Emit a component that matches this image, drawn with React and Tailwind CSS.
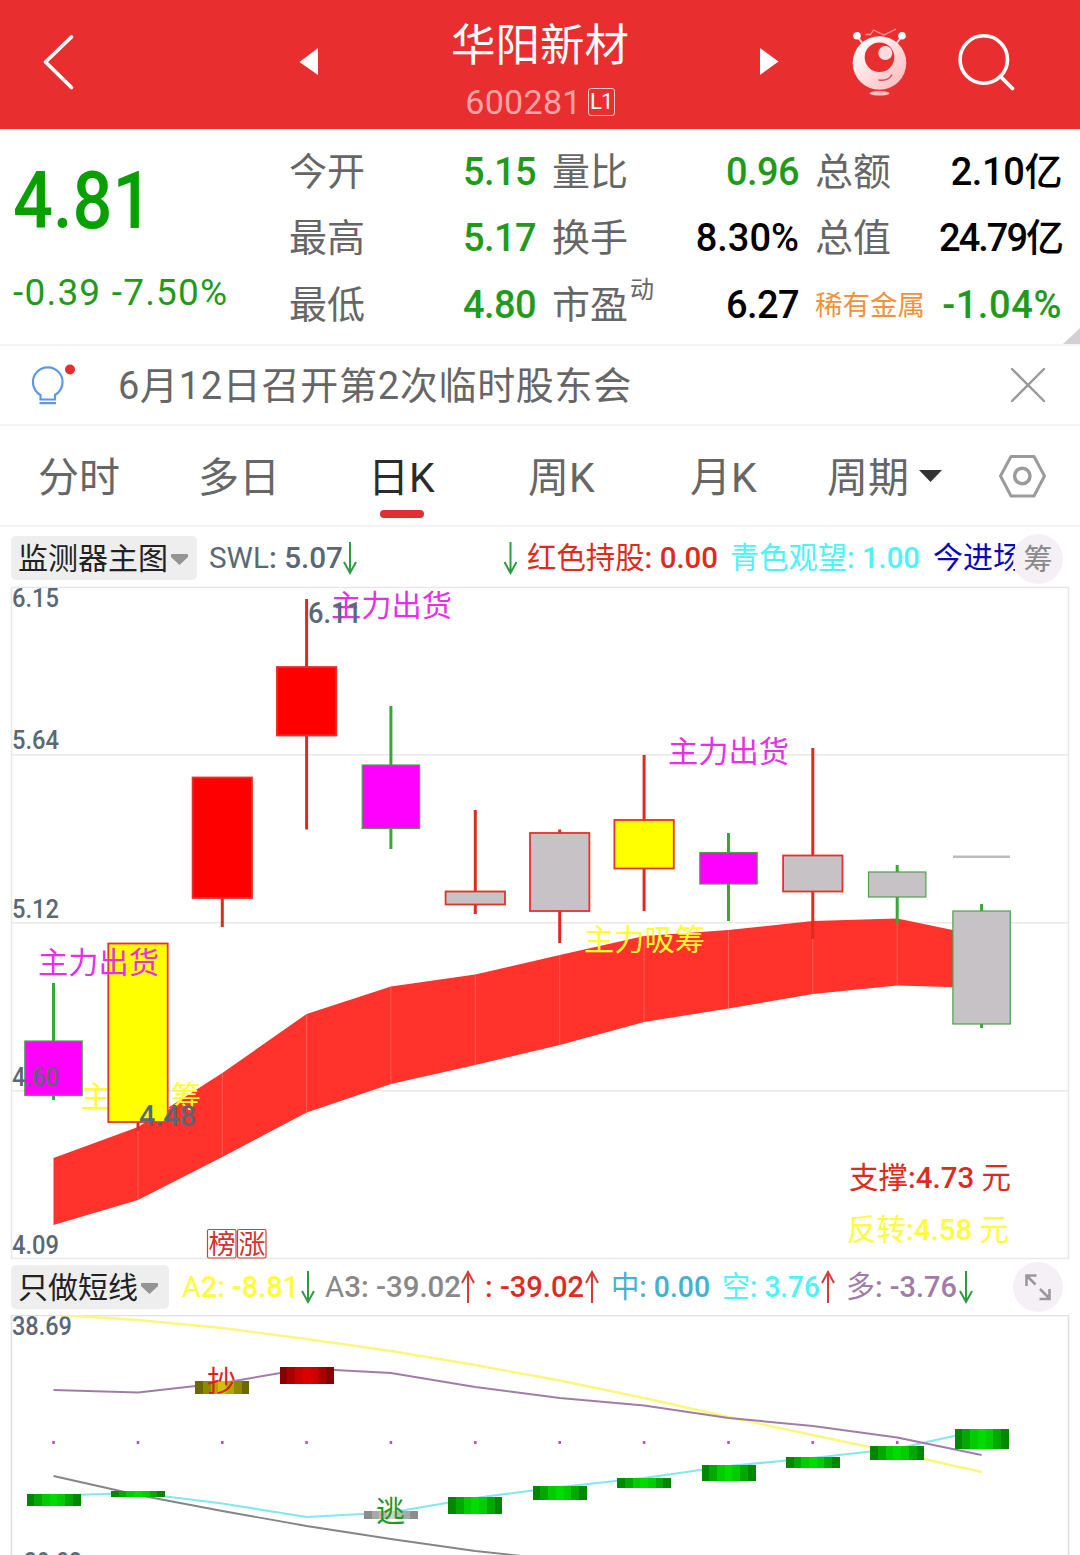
import clsx from 'clsx';

const STATS = [
  [
    { label: '今开', value: '5.15', color: 'text-[#1f9a1b] tracking-[-0.6px]' },
    { label: '最高', value: '5.17', color: 'text-[#1f9a1b] tracking-[-0.6px]' },
    { label: '最低', value: '4.80', color: 'text-[#1f9a1b] tracking-[-0.6px]' },
  ],
  [
    { label: '量比', value: '0.96', color: 'text-[#1f9a1b] tracking-[-0.6px]' },
    { label: '换手', value: '8.30%', color: 'text-black tracking-[0px]' },
    { label: '市盈', sup: '动', value: '6.27', color: 'text-black tracking-[-0.6px]' },
  ],
  [
    { label: '总额', value: '2.10亿', color: 'text-black tracking-[-0.4px]' },
    { label: '总值', value: '24.79亿', color: 'text-black tracking-[-2px]' },
    { label: '稀有金属', tag: true, value: '-1.04%', color: 'text-[#1f9a1b] tracking-[0.6px]' },
  ],
];

const RED = '#e02a20';
const GREEN = '#35a835';
const GREY = '#c7c2c6';
const SLATE = '#5a6875';

// cx is the centre of the body, top/bottom its span, high/low the wick
const CANDLES = [
  { cx: 53.5, top: 1041, bottom: 1095.5, high: 983, low: 1100, fill: '#ff00ff', up: false },
  { cx: 138, top: 943.5, bottom: 1122, high: 943, low: 1131, fill: '#ffff00', up: true },
  { cx: 222.3, top: 777.5, bottom: 898, high: 777, low: 927, fill: '#ff0000', up: true },
  { cx: 306.6, top: 667, bottom: 735.5, high: 599, low: 829.5, fill: '#ff0000', up: true },
  { cx: 390.9, top: 765, bottom: 828.5, high: 706, low: 849, fill: '#ff00ff', up: false },
  { cx: 475.3, top: 891.5, bottom: 904.5, high: 810, low: 914, fill: GREY, up: true },
  { cx: 559.7, top: 833, bottom: 911, high: 829.5, low: 943, fill: GREY, up: true },
  { cx: 644.1, top: 820, bottom: 868.5, high: 755, low: 911, fill: '#ffff00', up: true },
  { cx: 728.5, top: 852.5, bottom: 884, high: 833, low: 921, fill: '#ff00ff', up: false },
  { cx: 812.8, top: 855.5, bottom: 891.5, high: 748, low: 939, fill: GREY, up: true },
  { cx: 897.2, top: 872, bottom: 897, high: 865, low: 924, fill: GREY, up: false },
  { cx: 981.6, top: 911, bottom: 1024, high: 904, low: 1028, fill: GREY, up: false },
];

const BAND_TOP = [1158, 1127, 1073, 1014, 986.5, 974.5, 955, 936, 930, 921, 918.5, 936];
const BAND_BOTTOM = [1225, 1200, 1157, 1112.5, 1084, 1065, 1045, 1022, 1008.5, 994, 985.5, 988];

const LINES = [
  { color: '#fbf77c', width: 2.4, ys: [1314.5, 1320, 1328, 1339, 1351, 1365, 1380.5, 1398, 1417, 1435, 1453, 1472] },
  { color: '#7fe9ee', width: 2.2, ys: [1495.5, 1493, 1503.5, 1517, 1512.5, 1498, 1487, 1478, 1466, 1458, 1448.5, 1430] },
  { color: '#a27ca6', width: 2, ys: [1390, 1392.5, 1383, 1368.5, 1373, 1387, 1398, 1405.5, 1418, 1426, 1437.5, 1455] },
  { color: '#858585', width: 1.8, ys: [1476, 1495, 1511, 1526, 1539, 1551, 1560] },
];

const SHADES = {
  green: ['#008700', '#00a800', '#00cc00', '#00dc00'],
  olive: ['#6c6800', '#8e8a00', '#b0a800', '#d0c400'],
  red: ['#8a0000', '#aa0000', '#cc0000', '#dd0000'],
  grey: ['#8c8c8c', '#a8a8a8', '#bcbcbc', '#d0d0d0'],
};

const BARS = [
  { top: 1494, bottom: 1506, shade: 'green' },
  { top: 1491, bottom: 1497, shade: 'green' },
  { top: 1381, bottom: 1394, shade: 'olive' },
  { top: 1367, bottom: 1384, shade: 'red' },
  { top: 1511, bottom: 1519, shade: 'grey' },
  { top: 1497, bottom: 1514, shade: 'green' },
  { top: 1486, bottom: 1500, shade: 'green' },
  { top: 1478, bottom: 1488, shade: 'green' },
  { top: 1465, bottom: 1481, shade: 'green' },
  { top: 1457, bottom: 1468, shade: 'green' },
  { top: 1446, bottom: 1460, shade: 'green' },
  { top: 1429, bottom: 1449, shade: 'green' },
];

const points = (ys) => ys.map((y, i) => `${CANDLES[i].cx},${y}`).join(' ');

// numbers are set a little heavier than the words beside them
const Label = ({ x, y, w, size = 30, fill, children }) => (
  <text x={x} y={y} fill={fill} fontSize={size} textLength={w} lengthAdjust="spacingAndGlyphs">
    {children.split(/([\d.:-]+)/).map((part, i) => (
      <tspan key={i} fontWeight={i % 2 ? 500 : 400}>
        {part}
      </tspan>
    ))}
  </text>
);

const Mascot = () => (
  <svg className="h-[72px] w-[60px]" viewBox="850 26 60 72">
    <defs>
      <linearGradient id="body" x1="0" y1="0" x2="1" y2="1">
        <stop offset="0.1" stopColor="#fff" />
        <stop offset="1" stopColor="#ffb4b8" />
      </linearGradient>
    </defs>
    <path d="M865.500 34.500h5l3-4.500 10.500 5 12-6" fill="none" stroke="#f79a9a" strokeWidth="1.300" />
    <path d="M857 36l6 8M902 36l-6 8" stroke="#fbd5d6" strokeWidth="2" />
    <circle cx="857" cy="35.700" r="3.800" fill="#fff" />
    <circle cx="902" cy="35.700" r="3.800" fill="#fff" />
    <circle cx="879.500" cy="63" r="26.800" fill="url(#body)" />
    <circle cx="879.500" cy="57.300" r="14.800" fill="#e82e2f" />
    <circle cx="885.300" cy="53" r="7" fill="#ffdcdd" />
    <path d="M878.500 80q10 1.500 13.500-5.500" fill="none" stroke="#e04a4c" strokeWidth="1.500" />
    <ellipse cx="879.500" cy="93.300" rx="10" ry="2.300" fill="#fbbcbe" />
  </svg>
);

const Header = () => (
  <header className="flex h-[129px] items-start bg-[#e82e2f] text-white">
    <svg className="mt-[32px] ml-[40px] h-[60px] w-[40px]" viewBox="40 32 40 60" fill="none">
      <path d="M71.500 37L45.500 62l26 25.500" stroke="#fff" strokeWidth="3.700" strokeLinecap="round" strokeLinejoin="round" />
    </svg>
    <svg className="mt-[46px] ml-[219px] h-[32px] w-[20px]" viewBox="299 46 20 32">
      <path d="M299.500 62L318 48v27z" fill="#fff" />
    </svg>
    <div className="flex w-[440px] flex-col items-center pt-[17px] pl-[2px]">
      <div className="h-[58px] text-[44.5px] leading-[58px]">华阳新材</div>
      <div className="mt-[10px] flex h-[34px] items-center gap-[6px]">
        <span className="text-[34px] leading-[34px] tracking-[0.3px] text-[#ffa5a5]">600281</span>
        <span className="flex h-[28px] w-[27px] items-center justify-center rounded-[3px] border border-[#ffc9c9] text-[22px] leading-none tracking-[-1px]">
          L1
        </span>
      </div>
    </div>
    <svg className="mt-[46px] h-[32px] w-[20px]" viewBox="759 46 20 32">
      <path d="M778.500 61.500L760 48v27z" fill="#fff" />
    </svg>
    <div className="mt-[26px] ml-[71px]">
      <Mascot />
    </div>
    <svg className="mt-[30px] ml-[45px] h-[64px] w-[64px]" viewBox="955 30 64 64" fill="none">
      <circle cx="983.800" cy="59.500" r="23.700" stroke="#fff" strokeWidth="3.600" />
      <path d="M1000.500 76.500l12 12" stroke="#fff" strokeWidth="3.800" strokeLinecap="round" />
    </svg>
  </header>
);

const Quote = () => (
  <section className="relative flex h-[217px] overflow-hidden border-b-2 border-[#f3f3f3]">
    <div className="w-[289px] shrink-0 pl-[13px]">
      <div className="mt-[32px] h-[80px] origin-left scale-x-[0.89] text-[79px] leading-[80px] font-medium whitespace-nowrap text-[#07a000]">
        4.81
      </div>
      <div className="mt-[32px] h-[40px] text-[37px] leading-[40px] tracking-[1.2px] whitespace-nowrap text-[#1f9a1b]">
        -0.39 -7.50%
      </div>
    </div>
    <div className="mt-[10px] flex gap-[16px]">
      {STATS.map((col, i) => (
        <div key={i} className="flex w-[247px] flex-col">
          {col.map((s) => (
            <div key={s.label} className="flex h-[66.5px] items-center justify-between whitespace-nowrap">
              <span
                className={clsx(
                  'flex',
                  s.tag ? 'text-[27.5px] text-[#f0923c]' : 'text-[38px] text-[#666]'
                )}
              >
                {s.label}
                {s.sup && <span className="-mt-[5px] ml-[2px] text-[24px] leading-[36px]">{s.sup}</span>}
              </span>
              <span className={clsx('text-[38px] font-medium', s.color)}>{s.value}</span>
            </div>
          ))}
        </div>
      ))}
    </div>
    <svg className="absolute right-0 bottom-0 h-[16px] w-[17px]" viewBox="0 0 17 16">
      <path d="M17 0v16H0z" fill="#d3d0d3" />
    </svg>
  </section>
);

const Notice = () => (
  <section className="flex h-[80px] items-center border-b-2 border-[#f3f3f3] text-[#666]">
    <svg className="ml-[28px] h-[50px] w-[50px]" viewBox="28 360 50 50" fill="none">
      <path d="M40.500 399.500V395a14.800 14.800 0 1 1 14.500 0v4.500zM39.500 403.200h16.500" stroke="#5c97e6" strokeWidth="2.200" />
      <circle cx="70" cy="369.500" r="5" fill="#e62e30" />
    </svg>
    <div className="mt-[3px] ml-[40px] text-[38px] tracking-[0.7px] whitespace-nowrap">6月12日召开第2次临时股东会</div>
    <svg className="mr-[34px] ml-auto h-[36px] w-[36px]" viewBox="0 0 36 36">
      <path d="M2 2l32 32M34 2L2 34" stroke="#999" strokeWidth="2.400" strokeLinecap="round" />
    </svg>
  </section>
);

const Tabs = () => (
  <nav className="flex h-[101px] items-start border-b-2 border-[#f3f3f3] pl-[38px] text-[41px] leading-[60px] text-[#666]">
    <div className="mt-[22px] w-[160px]">分时</div>
    <div className="mt-[22px] w-[170px]">多日</div>
    <div className="mt-[22px] w-[160px] text-[#2b2b2b]">
      日K
      <div className="mt-[2px] ml-[12px] h-[8px] w-[44px] rounded-full bg-[#e22e30]" />
    </div>
    <div className="mt-[22px] w-[162px]">周K</div>
    <div className="mt-[22px] w-[137px]">月K</div>
    <div className="mt-[22px] flex items-center gap-[10px]">
      周期
      <svg className="-mt-[5px] h-[12px] w-[23px]" viewBox="0 0 23 12">
        <path d="M0 0h23L11.500 12z" fill="#333" />
      </svg>
    </div>
    <svg className="mt-[26px] ml-[55px] h-[48px] w-[50px]" viewBox="997 452 50 48" fill="none" stroke="#9b9b9b" strokeWidth="3">
      <path d="M1011 456.500h23l10.500 19.500-10.500 20h-23l-10.500-20z" strokeLinejoin="round" />
      <circle cx="1022.300" cy="476" r="7.700" strokeWidth="3.500" />
    </svg>
  </nav>
);

const Picker = ({ children, className }) => (
  <div className={clsx('flex h-[44px] shrink-0 items-center rounded-[5px] bg-[#eee] pl-[7px] text-[30px] text-[#222]', className)}>
    {children}
    <svg className="mt-[3px] ml-[3px] h-[11px] w-[17px]" viewBox="0 0 17 11">
      <path d="M1 0h15q1 0 1 1v2l-8.500 8L0 3V1q0-1 1-1z" fill="#969396" />
    </svg>
  </div>
);

const Arrow = ({ x, y, up }) => (
  <path
    d={up ? `M${x} ${y + 31}V${y}M${x - 6} ${y + 11}L${x} ${y}l6 11` : `M${x} ${y}v31M${x - 6} ${y + 20}l6 11l6-11`}
    fill="none"
    stroke={up ? '#d83a34' : '#2f9a42'}
    strokeWidth="2"
  />
);

const MainIndicators = () => (
  <div className="flex h-[60px] items-start pt-[9px] pl-[11px]">
    <Picker className="w-[186px]">监测器主图</Picker>
    <svg className="-mt-[9px] h-[60px] w-[818px]" viewBox="197 527 818 60">
      <Label x={209} y={568} w={134} fill={SLATE}>SWL: 5.07</Label>
      <Arrow x={350} y={542} />
      <Arrow x={510.5} y={542} />
      <Label x={527} y={568} w={191} fill={RED}>红色持股: 0.00</Label>
      <Label x={730} y={568} w={190} fill="#4df4f6">青色观望: 1.00</Label>
      <Label x={933} y={568} w={90} fill="#0808b8">今进场</Label>
    </svg>
    <div className="-mt-[2px] -ml-[2px] flex size-[50px] items-center justify-center rounded-full bg-[#f4f0f5] pt-[4px] text-[29px] text-[#888]">
      筹
    </div>
  </div>
);

const MainChart = () => (
  <svg className="block h-[672px] w-full overflow-visible" viewBox="0 587 1080 672">
    <path d="M11.500 587.500H1068.500V1258.500H11.500zM12 754.700H1068M12 922.700H1068M12 1090.700H1068" fill="none" stroke="#e8e8e8" strokeWidth="1.500" />
    <polygon points={`${points(BAND_TOP)} ${points(BAND_BOTTOM).split(' ').reverse().join(' ')}`} fill="#ff322c" />
    {CANDLES.slice(1, 11).map((c, i) => (
      <path key={c.cx} d={`M${c.cx} ${BAND_TOP[i + 1]}V${BAND_BOTTOM[i + 1]}`} stroke="#ff6a62" strokeWidth="0.800" />
    ))}
    <Label x={81} y={1107} w={120} fill="#ffff2e">主力吸筹</Label>
    {CANDLES.map((c) => {
      const half = c.up ? 29.7 : 28.7;
      return (
        <g key={c.cx}>
          <path d={`M${c.cx} ${c.high}V${c.low}`} stroke={c.up ? RED : GREEN} strokeWidth="3" />
          <rect
            x={c.cx - half}
            y={c.top}
            width={half * 2}
            height={c.bottom - c.top}
            fill={c.fill}
            stroke={c.up ? '#e8302a' : '#4f9f4f'}
            strokeWidth={c.up ? 1.8 : 1.2}
          />
        </g>
      );
    })}
    <path d="M953 856.700h57" stroke="#bdbabd" strokeWidth="2.400" />
    <Label x={38} y={973} w={121} fill="#e82fe8">主力出货</Label>
    <Label x={331} y={616} w={121} fill="#e82fe8">主力出货</Label>
    <Label x={668} y={762} w={121} fill="#e82fe8">主力出货</Label>
    <Label x={584} y={950} w={121} fill="#ffff2e">主力吸筹</Label>
    <Label x={308} y={623} w={54} size={29} fill={SLATE}>6.11</Label>
    <Label x={139} y={1126} w={57} size={29} fill={SLATE}>4.48</Label>
    <Label x={12} y={607} w={47} size={25} fill={SLATE}>6.15</Label>
    <Label x={12} y={749} w={47} size={25} fill={SLATE}>5.64</Label>
    <Label x={12} y={918} w={47} size={25} fill={SLATE}>5.12</Label>
    <Label x={12} y={1086} w={47} size={25} fill={SLATE}>4.60</Label>
    <Label x={12} y={1254} w={47} size={25} fill={SLATE}>4.09</Label>
    <Label x={849} y={1188} w={162} fill={RED}>支撑:4.73 元</Label>
    <Label x={847} y={1240} w={162} fill="#fdfd3a">反转:4.58 元</Label>
    <g fill="none" stroke="#d0403a" strokeWidth="1.200">
      <rect x="207.500" y="1229.500" width="28.500" height="28.500" rx="1.500" />
      <rect x="237.500" y="1229.500" width="28.500" height="28.500" rx="1.500" />
    </g>
    <Label x={208.5} y={1254} w={27} size={27} fill="#d0342e">榜</Label>
    <Label x={238.5} y={1254} w={27} size={27} fill="#d0342e">涨</Label>
  </svg>
);

const SubIndicators = () => (
  <div className="flex h-[56px] items-start pt-[6px] pl-[11px]">
    <Picker className="w-[158px]">只做短线</Picker>
    <svg className="-mt-[6px] h-[56px] w-[844px]" viewBox="169 1259 844 56">
      <Label x={182} y={1297} w={117} fill="#fdfd3a">A2: -8.81</Label>
      <Arrow x={308} y={1271} />
      <Label x={325} y={1297} w={136} fill="#888">A3: -39.02</Label>
      <Arrow x={468} y={1272} up />
      <Label x={485} y={1297} w={99} fill={RED}>: -39.02</Label>
      <Arrow x={592} y={1272} up />
      <Label x={611} y={1297} w={99} fill="#42b2d0">中: 0.00</Label>
      <Label x={722} y={1297} w={98} fill="#4df4f6">空: 3.76</Label>
      <Arrow x={828} y={1272} up />
      <Label x={846} y={1297} w={111} fill="#a27ca6">多: -3.76</Label>
      <Arrow x={966} y={1271} />
    </svg>
    <svg className="-mt-[3px] size-[50px]" viewBox="0 0 50 50" fill="none">
      <circle cx="25" cy="25" r="25" fill="#f4f0f5" />
      <path d="M22.500 22.500L13.500 13.500M13.500 24V13.500H23.500M27 27l9.500 9.500M36.500 27v10H26.500" stroke="#9b989b" strokeWidth="2.600" />
    </svg>
  </div>
);

const SubChart = () => (
  <svg className="block h-[240px] w-full" viewBox="0 1315 1080 240">
    <path d="M11.500 1560V1315.500H1068.500V1560" fill="none" stroke="#e0e0e0" strokeWidth="1.500" />
    <Label x={12} y={1335} w={60} size={25} fill={SLATE}>38.69</Label>
    <Label x={24} y={1571} w={58} size={25} fill={SLATE}>39.02</Label>
    {CANDLES.slice(0, 11).map((c) => (
      <rect key={c.cx} x={c.cx - 1.3} y={1441} width="2.600" height="3" fill="#c050c8" />
    ))}
    {LINES.map((l) => (
      <polyline key={l.color} points={points(l.ys)} fill="none" stroke={l.color} strokeWidth={l.width} />
    ))}
    {BARS.map((b, i) =>
      SHADES[b.shade].map((color, n) => {
        const half = 27 - n * 7.7;
        return (
          <rect
            key={`${i}-${n}`}
            x={CANDLES[i].cx - half}
            y={b.top}
            width={half * 2}
            height={b.bottom - b.top}
            fill={color}
            shapeRendering="crispEdges"
          />
        );
      })
    )}
    <Label x={207} y={1392} w={29} size={29} fill="#e0201a">抄</Label>
    <Label x={376} y={1522} w={29} size={29} fill="#1f9a1b">逃</Label>
  </svg>
);

const App = () => (
  <main className="h-[1555px] w-[1080px] overflow-hidden bg-white font-[Roboto,'Noto_Sans_CJK_SC',sans-serif]">
    <Header />
    <Quote />
    <Notice />
    <Tabs />
    <MainIndicators />
    <MainChart />
    <SubIndicators />
    <SubChart />
  </main>
);

export default App;
